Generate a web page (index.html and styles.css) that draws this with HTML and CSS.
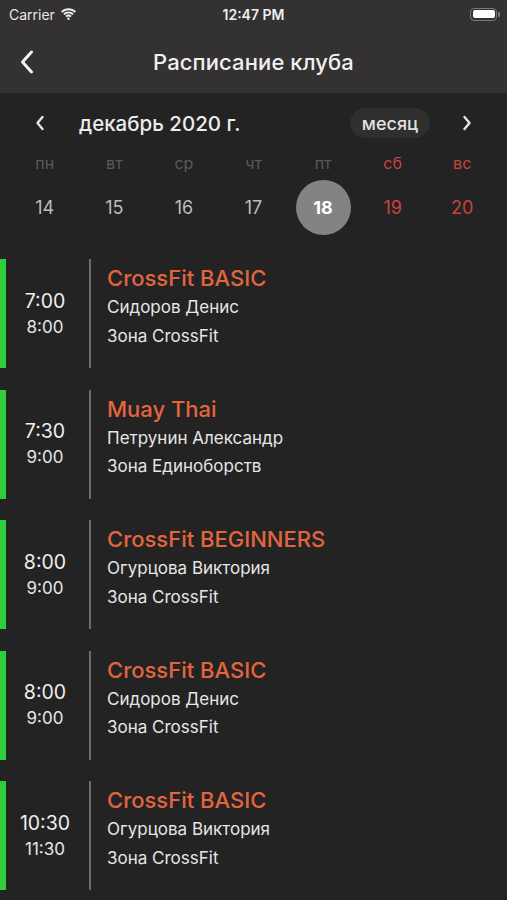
FILE: index.html
```html
<!DOCTYPE html>
<html lang="ru">
<head>
<meta charset="utf-8">
<link rel="stylesheet" href="styles.css">
</head>
<body>
<header class="top">
  <div class="status">
    <div class="carrier">Carrier
      <svg class="wifi" width="17" height="12" viewBox="0 0 17 12"><path d="M8.5 2.2c2.4 0 4.6.9 6.2 2.5l1.3-1.3C14 1.4 11.4.3 8.5.3S3 1.4 1 3.4l1.3 1.3C3.9 3.1 6.1 2.2 8.5 2.2z" fill="#eee"/><path d="M8.5 5.4c1.5 0 2.9.6 3.9 1.6l1.3-1.3C12.4 4.3 10.5 3.5 8.5 3.5S4.6 4.3 3.3 5.7l1.3 1.3c1-1 2.4-1.6 3.9-1.6z" fill="#eee"/><path d="M8.5 8.5c.7 0 1.3.3 1.8.7l1.3-1.3C10.8 7.1 9.7 6.6 8.5 6.6S6.2 7.1 5.4 7.9l1.3 1.3c.5-.4 1.1-.7 1.8-.7z" fill="#eee"/><circle cx="8.5" cy="10.8" r="1.2" fill="#eee"/></svg>
    </div>
    <div class="clock">12:47 PM</div>
    <div class="battery"><span class="batt-body"><span class="batt-fill"></span></span><span class="batt-cap"></span></div>
  </div>
  <nav class="navbar">
    <svg class="back" width="14" height="24" viewBox="0 0 14 24"><path d="M11.5 2 L2.5 12 L11.5 22" fill="none" stroke="#f2f2f2" stroke-width="3" stroke-linecap="round" stroke-linejoin="round"/></svg>
    <h1 class="title">Расписание клуба</h1>
  </nav>
</header>

<section class="calendar">
  <div class="month-row">
    <svg class="chev" width="10" height="16" viewBox="0 0 10 16"><path d="M7.5 2 L2.5 8 L7.5 14" fill="none" stroke="#e6e6e6" stroke-width="2.4" stroke-linecap="round" stroke-linejoin="round"/></svg>
    <div class="month">декабрь 2020 г.</div>
    <div class="pill">месяц</div>
    <svg class="chev" width="10" height="16" viewBox="0 0 10 16"><path d="M2.5 2 L7.5 8 L2.5 14" fill="none" stroke="#e6e6e6" stroke-width="2.4" stroke-linecap="round" stroke-linejoin="round"/></svg>
  </div>
  <div class="week">
    <span>пн</span><span>вт</span><span>ср</span><span>чт</span><span>пт</span><span class="red">сб</span><span class="red">вс</span>
  </div>
  <div class="dates">
    <span>14</span><span>15</span><span>16</span><span>17</span><span class="sel"><b>18</b></span><span class="red">19</span><span class="red">20</span>
  </div>
</section>

<main class="list">
  <div class="card">
    <div class="time"><div class="t1">7:00</div><div class="t2">8:00</div></div>
    <div class="info"><div class="name">CrossFit BASIC</div><div class="line">Сидоров Денис</div><div class="line">Зона CrossFit</div></div>
  </div>
  <div class="card">
    <div class="time"><div class="t1">7:30</div><div class="t2">9:00</div></div>
    <div class="info"><div class="name">Muay Thai</div><div class="line">Петрунин Александр</div><div class="line">Зона Единоборств</div></div>
  </div>
  <div class="card">
    <div class="time"><div class="t1">8:00</div><div class="t2">9:00</div></div>
    <div class="info"><div class="name">CrossFit BEGINNERS</div><div class="line">Огурцова Виктория</div><div class="line">Зона CrossFit</div></div>
  </div>
  <div class="card">
    <div class="time"><div class="t1">8:00</div><div class="t2">9:00</div></div>
    <div class="info"><div class="name">CrossFit BASIC</div><div class="line">Сидоров Денис</div><div class="line">Зона CrossFit</div></div>
  </div>
  <div class="card">
    <div class="time"><div class="t1">10:30</div><div class="t2">11:30</div></div>
    <div class="info"><div class="name">CrossFit BASIC</div><div class="line">Огурцова Виктория</div><div class="line">Зона CrossFit</div></div>
  </div>
</main>
</body>
</html>
```

FILE: styles.css
```css
* { box-sizing: border-box; margin: 0; padding: 0; }
html, body { background: #232323; }
body {
  font-family: Inter, "Noto Sans", sans-serif;
  color: #ececec;
  width: 507px;
  height: 900px;
  overflow: hidden;
}
.top { background: #333131; }
.status {
  height: 30px;
  display: flex;
  align-items: center;
  justify-content: space-between;
  padding: 0 7px 2px 9px;
  position: relative;
}
.carrier { font-size: 14px; color: #e8e8e8; display: flex; align-items: center; gap: 5px; }
.clock {
  position: absolute; left: 0; right: 0; text-align: center;
  font-size: 14px; font-weight: 600; color: #efefef;
}
.battery { display: flex; align-items: center; }
.batt-body {
  width: 27px; height: 13px; border: 1.5px solid #777; border-radius: 4px;
  padding: 1.5px; display: block;
}
.batt-fill { display: block; width: 100%; height: 100%; background: #fff; border-radius: 2px; }
.batt-cap { width: 2px; height: 5px; background: #777; border-radius: 0 1px 1px 0; margin-left: 1px; }
.navbar {
  height: 63px;
  display: flex;
  align-items: center;
  position: relative;
  padding-left: 20px;
}
.title {
  position: absolute; left: 0; right: 0; text-align: center;
  font-size: 22px; font-weight: 500; color: #f0f0f0; letter-spacing: 0.1px;
}
.calendar { padding: 14px 10px 0; }
.month-row {
  display: flex; align-items: center; height: 32px;
  padding: 0 25px 0 25px;
}
.month { font-size: 20.5px; font-weight: 500; margin-left: 34px; flex: 1; color: #ececec; }
.pill {
  background: #2f2f2f; border-radius: 15px; height: 30px; width: 80px;
  display: flex; align-items: center; justify-content: center;
  font-size: 18px; font-weight: 500; color: #e2e2e2; margin-right: 32px;
}
.week, .dates { display: grid; grid-template-columns: repeat(7, 1fr); text-align: center; }
.week { margin-top: 12px; font-size: 16px; color: #5a5a5a; height: 24px; line-height: 24px; }
.week .red { color: #c8453b; }
.dates { margin-top: 5px; height: 55px; align-items: center; font-size: 18px; color: #bcbcbc; }
.dates .red { color: #c8453b; }
.dates .sel {
  justify-self: center; width: 55px; height: 55px; border-radius: 50%;
  background: #838383; color: #fff; display: flex; align-items: center; justify-content: center;
}
.dates .sel b { font-weight: 700; }
.list { margin-top: 24px; display: flex; flex-direction: column; gap: 21.5px; }
.card {
  height: 109px; display: flex; border-left: 6px solid #2fcc3c;
}
.time {
  width: 85px; border-right: 2px solid #6b6b6b;
  display: flex; flex-direction: column; align-items: center; justify-content: center;
  padding-right: 5px;
}
.t1 { font-size: 19.5px; color: #efefef; line-height: 26px; }
.t2 { font-size: 17px; color: #e6e6e6; line-height: 26px; }
.info { padding-left: 16px; padding-top: 5px; }
.name { font-size: 22px; font-weight: 500; color: #e2653f; line-height: 29px; }
.line { font-size: 17px; color: #e6e6e6; line-height: 28.5px; }
```
